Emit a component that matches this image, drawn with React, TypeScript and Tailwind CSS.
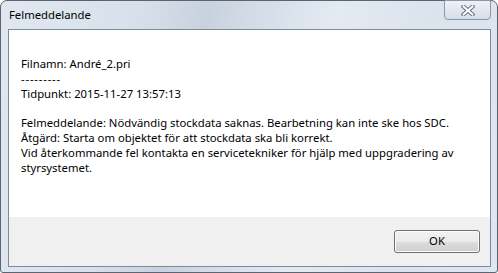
export default function App() {
  return (
    <div className="w-[498px] h-[273px] overflow-hidden bg-white">
      <div
        className="flex flex-col w-full h-full rounded-t-[7px] rounded-b-[3px] border border-[#5b6470] bg-[linear-gradient(100deg,#e0e7f0_0%,#d8e1eb_25%,#c8d2de_38%,#d6dfe9_50%,#e4eaf2_62%,#dbe3ec_80%,#dfe6ef_100%)]"
        style={{ fontFamily: '"Noto Sans", "Open Sans", sans-serif' }}
      >
        {/* title bar */}
        <div className="flex h-[28px] shrink-0 items-start justify-between">
          <span className="pl-[8px] pt-[6px] text-[11.3px] leading-[15px] text-black">Felmeddelande</span>
          <div className="mr-[6px] -mt-px flex h-[20px] w-[47px] items-center justify-center rounded-b-[4px] border border-[#8c98a8] bg-[linear-gradient(180deg,#eef2f6_0%,#e2e8ef_50%,#d5dde7_100%)]">
            <svg width="14" height="11" viewBox="0 0 14 11">
              <path d="M2.5 1.5 L11.5 9.5 M11.5 1.5 L2.5 9.5" stroke="#6b7380" strokeWidth="4" strokeLinecap="square" />
              <path d="M2.5 1.5 L11.5 9.5 M11.5 1.5 L2.5 9.5" stroke="#ffffff" strokeWidth="2" strokeLinecap="square" />
            </svg>
          </div>
        </div>

        {/* client area */}
        <div className="ml-[7px] mr-[6px] mb-[5px] flex flex-1 flex-col border border-[#7d8a9b] bg-white">
          <div className="flex-1 pl-[12px] pt-[26px] text-[11.3px] leading-[15px] text-black">
            <p>Filnamn: André_2.pri</p>
            <p className="tracking-[0.8px]">---------</p>
            <p>Tidpunkt: 2015-11-27 13:57:13</p>
            <p className="mt-[14px]">Felmeddelande: Nödvändig stockdata saknas. Bearbetning kan inte ske hos SDC.</p>
            <p>Åtgärd: Starta om objektet för att stockdata ska bli korrekt.</p>
            <p>Vid återkommande fel kontakta en servicetekniker för hjälp med uppgradering av</p>
            <p>styrsystemet.</p>
          </div>
          <div className="flex h-[49px] shrink-0 items-center justify-end bg-[#f0f0f0] pr-[10px]">
            <button className="h-[23px] w-[86px] rounded-[3px] border border-[#707070] bg-[linear-gradient(180deg,#f2f2f2_0%,#ebebeb_50%,#dddddd_51%,#cfcfcf_100%)] text-[11.3px] text-black shadow-[inset_0_0_0_1px_#fcfcfc]">
              OK
            </button>
          </div>
        </div>
      </div>
    </div>
  );
}
